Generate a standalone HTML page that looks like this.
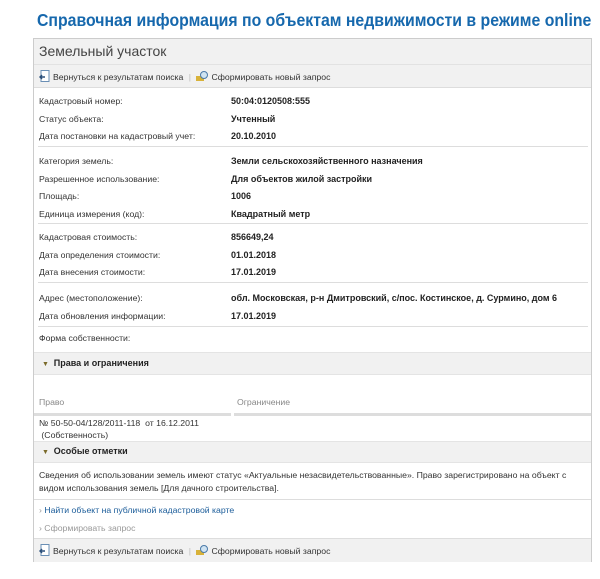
<!DOCTYPE html>
<html><head><meta charset="utf-8"><style>
*{margin:0;padding:0;box-sizing:border-box}
body{width:600px;height:579px;background:#fff;font-family:"Liberation Sans",sans-serif;font-size:8.7px;color:#333;position:relative;overflow:hidden}
.a{position:absolute;white-space:nowrap}
h1{position:absolute;left:37px;top:10px;font-size:17.5px;color:#1668ad;font-weight:bold;white-space:nowrap;transform:scaleX(0.905);transform-origin:0 0}
.panel{position:absolute;left:33px;top:38px;width:559px;height:524px;border:1px solid #ccc}
.gray{position:absolute;left:0;width:557px;background:#f1f1f1}
.hr{position:absolute;left:4px;width:550px;height:1px;background:#ddd}
b{color:#222;font-size:9px}
.ic{display:inline-block;width:11px;height:12px;vertical-align:-2px;margin-right:3px}
</style></head><body>
<h1>Справочная информация по объектам недвижимости в режиме online</h1>
<div class="panel">
<div class="gray" style="top:0;height:49px;border-bottom:1px solid #ddd"></div>
<div class="a" style="left:5px;top:4px;font-size:14px;color:#444">Земельный участок</div>
<div class="hr" style="top:25px;left:0;width:557px;background:#e2e2e2"></div>
<div class="a" style="left:5px;top:31px">
<svg class="ic" viewBox="0 0 11 12"><rect x="2" y="0.5" width="8" height="11" fill="#fff" stroke="#6a8fb5"/><path d="M1 7h5M3 5L1 7l2 2" stroke="#2a4f7a" stroke-width="1.5" fill="none"/></svg>Вернуться к результатам поиска <span style="color:#bbb;margin:0 3px">|</span>
<svg class="ic" viewBox="0 0 12 12" style="width:12px"><rect x="0" y="6" width="8" height="5" fill="#d8b23a"/><circle cx="8" cy="5" r="3.5" fill="#cfe3f2" stroke="#4a7aa8"/></svg>Сформировать новый запрос</div>

<div class="a" style="left:5px;top:54px;line-height:17.5px">Кадастровый номер:<br>Статус объекта:<br>Дата постановки на кадастровый учет:</div>
<div class="a" style="left:197px;top:54px;line-height:17.5px"><b>50:04:0120508:555<br>Учтенный<br>20.10.2010</b></div>
<div class="hr" style="top:107px"></div>
<div class="a" style="left:5px;top:114px;line-height:17.5px">Категория земель:<br>Разрешенное использование:<br>Площадь:<br>Единица измерения (код):</div>
<div class="a" style="left:197px;top:114px;line-height:17.5px"><b>Земли сельскохозяйственного назначения<br>Для объектов жилой застройки<br>1006<br>Квадратный метр</b></div>
<div class="hr" style="top:184px"></div>
<div class="a" style="left:5px;top:190px;line-height:17.5px">Кадастровая стоимость:<br>Дата определения стоимости:<br>Дата внесения стоимости:</div>
<div class="a" style="left:197px;top:190px;line-height:17.5px"><b>856649,24<br>01.01.2018<br>17.01.2019</b></div>
<div class="hr" style="top:243px"></div>
<div class="a" style="left:5px;top:251px;line-height:17.5px">Адрес (местоположение):<br>Дата обновления информации:</div>
<div class="a" style="left:197px;top:251px;line-height:17.5px"><b>обл. Московская, р-н Дмитровский, с/пос. Костинское, д. Сурмино, дом 6<br>17.01.2019</b></div>
<div class="hr" style="top:287px"></div>
<div class="a" style="left:5px;top:294px">Форма собственности:</div>
<div class="gray" style="top:313px;height:23px;border-top:1px solid #e4e4e4;border-bottom:1px solid #e4e4e4"></div>
<div class="a" style="left:8px;top:319px"><span style="color:#7a6a2a;font-size:7px">▼</span>&nbsp;&nbsp;<b>Права и ограничения</b></div>
<div class="a" style="left:5px;top:358px;color:#888">Право</div>
<div class="a" style="left:203px;top:358px;color:#888">Ограничение</div>
<div style="position:absolute;left:0;top:374px;width:197px;height:3px;background:#ddd"></div>
<div style="position:absolute;left:200px;top:374px;width:357px;height:3px;background:#ddd"></div>
<div class="a" style="left:5px;top:378px;line-height:12px">№ 50-50-04/128/2011-118 &nbsp;от 16.12.2011<br>&nbsp;(Собственность)</div>
<div class="gray" style="top:402px;height:22px;border-top:1px solid #e4e4e4;border-bottom:1px solid #e4e4e4"></div>
<div class="a" style="left:8px;top:407px"><span style="color:#7a6a2a;font-size:7px">▼</span>&nbsp;&nbsp;<b>Особые отметки</b></div>
<div class="a" style="left:5px;top:430px;line-height:13px">Сведения об использовании земель имеют статус «Актуальные незасвидетельствованные». Право зарегистрировано на объект с<br>видом использования земель [Для дачного строительства].</div>
<div class="hr" style="top:460px;left:0;width:557px"></div>
<div class="a" style="left:5px;top:466px;color:#1c5d9a"><span style="color:#999">›</span> Найти объект на публичной кадастровой карте</div>
<div class="a" style="left:5px;top:484px;color:#999">› Сформировать запрос</div>
<div class="gray" style="top:499px;height:24px;border-top:1px solid #ddd"></div>
<div class="a" style="left:5px;top:505px">
<svg class="ic" viewBox="0 0 11 12"><rect x="2" y="0.5" width="8" height="11" fill="#fff" stroke="#6a8fb5"/><path d="M1 7h5M3 5L1 7l2 2" stroke="#2a4f7a" stroke-width="1.5" fill="none"/></svg>Вернуться к результатам поиска <span style="color:#bbb;margin:0 3px">|</span>
<svg class="ic" viewBox="0 0 12 12" style="width:12px"><rect x="0" y="6" width="8" height="5" fill="#d8b23a"/><circle cx="8" cy="5" r="3.5" fill="#cfe3f2" stroke="#4a7aa8"/></svg>Сформировать новый запрос</div>
</div>
</body></html>
